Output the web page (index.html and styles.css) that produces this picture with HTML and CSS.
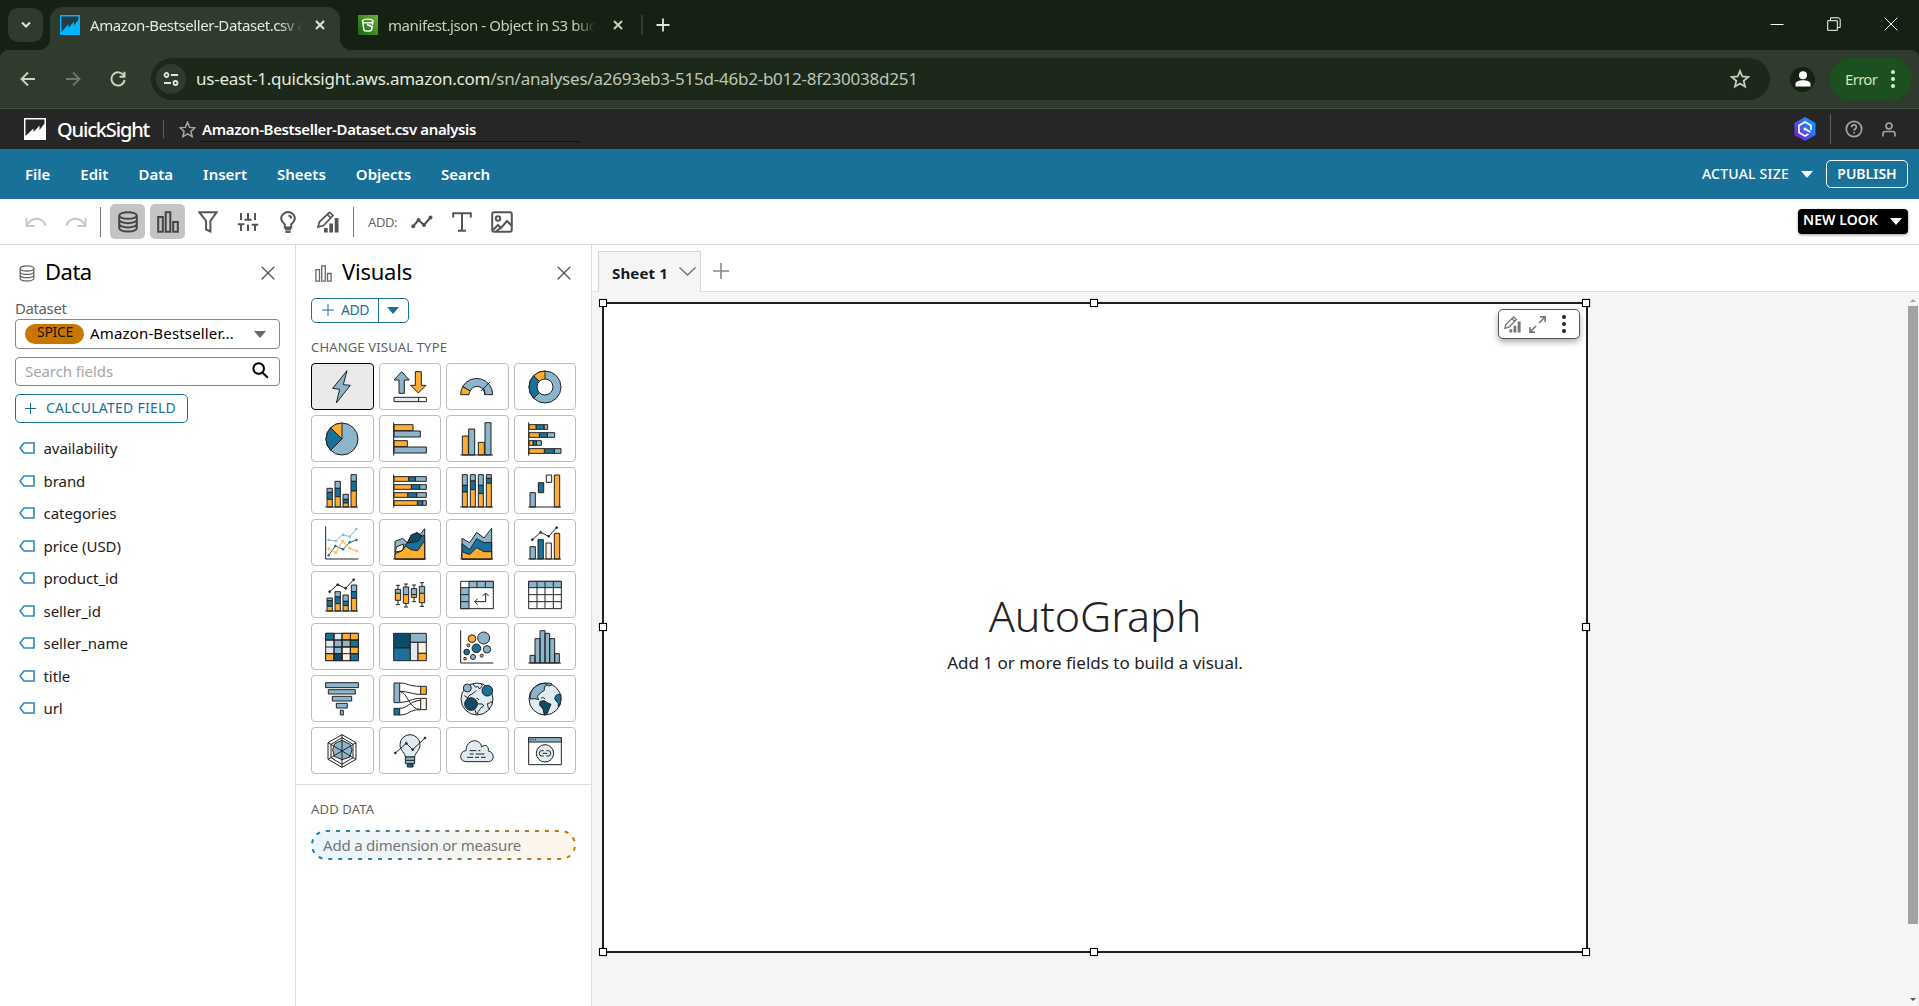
FILE: index.html
```html
<!DOCTYPE html>
<html lang="en">
<head>
<meta charset="utf-8">
<title>Amazon-Bestseller-Dataset.csv analysis</title>
<link rel="stylesheet" href="styles.css">
</head>
<body>
<svg class="defs" width="0" height="0">
  <defs>
    <linearGradient id="qgrad" x1="0" y1="1" x2="1" y2="0"><stop offset=".2" stop-color="#6a2be8"/><stop offset=".75" stop-color="#1a8cff"/></linearGradient>
    <linearGradient id="s3grad" x1="0" y1="1" x2="1" y2="0"><stop offset="0" stop-color="#1b660f"/><stop offset="1" stop-color="#6cae3e"/></linearGradient>
    <linearGradient id="dropgrad"><stop offset="0" stop-color="#0a84c4"/><stop offset="1" stop-color="#cc7a00"/></linearGradient>
    <linearGradient id="dropfill"><stop offset="0" stop-color="#e8f5fd"/><stop offset="1" stop-color="#fff5ea"/></linearGradient>
    <symbol id="db" viewBox="0 0 20 22"><path d="M1.2 4.5v12.6c0 1.9 3.9 3.5 8.8 3.5s8.8-1.6 8.8-3.5V4.500M1.200 8.700c0 1.900 3.900 3.500 8.800 3.500s8.800-1.600 8.800-3.500M1.200 12.900c0 1.900 3.900 3.500 8.800 3.500s8.800-1.600 8.800-3.500"/><ellipse cx="10" cy="4.500" rx="8.800" ry="3.300"/></symbol>
    <symbol id="bars" viewBox="0 0 22 22"><path d="M1.200 6h4.600v14.800H1.200zM8.700 1.200h4.600v19.600H8.700zM16.200 11h4.600v9.800h-4.600z"/></symbol>
    <symbol id="pencil" viewBox="0 0 22 22"><path d="M1 16 2.500 10.800 12.500 1.300 16 4.600 6.500 14.500zM10.300 3.500l3.500 3.300" fill="none" stroke-width="1.700"/><path d="M7 17h3.700v4.500H7zM12.300 12.500H16v9h-3.700zM17.700 7h3.800v14.500h-3.800z" fill="currentColor" stroke="none"/></symbol>
    <symbol id="tag" viewBox="0 0 16 12"><path d="M5 1h10v10H5L1 6z"/></symbol>
  </defs>
</svg>

<header class="tabstrip">
  <button class="tab-search"><svg width="12" height="8"><path d="M2 1.500l4 4 4-4"/></svg></button>
  <div class="tab active">
    <svg width="20" height="20"><path d="M0 0h20v20H0z" fill="#00b5ff" stroke="none"/><path d="M1.500 1.500h17v3L14 10.500V6.500L8.500 13V9L1.500 17z" fill="#243b45" stroke="none"/></svg>
    <span class="tab-title">Amazon-Bestseller-Dataset.csv a</span>
    <svg class="x" width="10" height="10"><path d="M1 1l8 8M9 1L1 9"/></svg>
  </div>
  <div class="tab">
    <svg width="20" height="20"><path d="M0 0h20v20H0z" fill="url(#s3grad)" stroke="none"/><path d="M4.500 6l1.500 9c.5 1.500 7 1.500 7.500 0l.6-3M15 6l-.6 4M9 9.500l6 2.500M4.500 6c0-2.500 10.500-2.500 10.500 0s-10.500 2.500-10.500 0z" fill="none" stroke="#fff" stroke-width="1.400"/></svg>
    <span class="tab-title second">manifest.json - Object in S3 buc</span>
    <svg class="x" width="10" height="10"><path d="M1 1l8 8M9 1L1 9"/></svg>
  </div>
  <span class="tab-sep"></span>
  <svg class="newtab" width="14" height="14"><path d="M7 .5v13M.5 7h13"/></svg>
  <div class="win">
    <svg width="14" height="14"><path d="M.5 7.500h13"/></svg>
    <svg width="14" height="14"><path d="M.7 3.700h9.600v9.600H.7zM3.500 3V.8h7.700q2 0 2 2V10.500H11"/></svg>
    <svg width="14" height="14"><path d="M.7.7l12.600 12.600M13.300.7L.7 13.300"/></svg>
  </div>
</header>

<div class="chrome">
<div class="addressbar">
  <svg class="nav" width="16" height="16"><path d="M15 8H2M8 1.500L1.500 8 8 14.500"/></svg>
  <svg class="nav dim" width="16" height="16"><path d="M1 8h13M8 1.500L14.500 8 8 14.500"/></svg>
  <svg class="nav" width="16" height="16"><path d="M13.800 4.600A6.600 6.600 0 1 0 14.600 9M14.500.8v5h-5"/></svg>
  <div class="omnibox">
    <span class="site"><svg width="16" height="14"><circle cx="3.500" cy="3" r="2"/><circle cx="12.500" cy="11" r="2"/><path d="M8 3h7M1 11h7"/></svg></span>
    <span class="url"><b>us-east-1.quicksight.aws.amazon.com</b>/sn/analyses/a2693eb3-515d-46b2-b012-8f230038d251</span>
    <svg class="star" width="20" height="20" viewBox="0 0 20 20"><path d="M10 2l2.300 5.500 6 .5-4.600 3.900 1.400 5.800L10 14.600l-5.100 3.100 1.400-5.800L1.700 8l6-.5z"/></svg>
  </div>
  <span class="avatar"><svg width="16" height="16"><circle cx="8" cy="4.200" r="4"/><path d="M.5 15.500v-2.500c0-5 15-5 15 0v2.500z"/></svg></span>
  <div class="error">Error<i></i></div>
</div>
</div>

<div class="appbar">
  <svg class="logo" width="22" height="22"><path d="M0 0h22v22H0z" fill="#fff" stroke="none"/><path d="M1.500 1.500h19v4L15.500 12V7.500L9.500 14V10.500L1.500 18z" fill="#262626" stroke="none"/></svg>
  <span class="brand">QuickSight</span>
  <span class="rule"></span>
  <svg class="fav" width="17" height="17" viewBox="0 0 20 20"><path d="M10 1.500l2.500 6 6.300.5-4.800 4.200 1.500 6.300L10 15.200l-5.500 3.300L6 12.200 1.200 8l6.300-.5z"/></svg>
  <span class="doc">Amazon-Bestseller-Dataset.csv analysis</span>
  <div class="right">
    <svg width="22" height="24" viewBox="0 0 22 24"><path d="M11 0l10.500 6v12L11 24 .5 18V6z" fill="url(#qgrad)" stroke="none"/><path d="M17 13V8.500L11 5 5 8.500v7l6 3.500 3.500-2M11 12l5.500 3" fill="none" stroke="#fff" stroke-width="1.700"/><circle cx="11" cy="12" r="1.600" fill="#fff" stroke="none"/></svg>
    <span class="rule tall"></span>
    <svg class="line" width="18" height="18"><circle cx="9" cy="9" r="7.700"/><path d="M6.700 7.200c0-3 4.700-3 4.700-.2 0 1.800-2.300 1.700-2.300 3.800M9.100 12v1.600"/></svg>
    <svg class="line" width="14" height="15"><circle cx="7" cy="4" r="3"/><path d="M1 14.500V12q0-2.500 2.500-2.500h7Q13 9.500 13 12v2.500"/></svg>
  </div>
</div>

<nav class="menubar">
  <span>File</span><span>Edit</span><span>Data</span><span>Insert</span><span>Sheets</span><span>Objects</span><span>Search</span>
  <div class="right"><span class="size">ACTUAL SIZE</span><i class="caret"></i><button class="publish">PUBLISH</button></div>
</nav>

<div class="toolbar">
  <svg class="faded" width="22" height="12"><path d="M1.500 2v8h8M1.800 9.800C6 .5 17 .5 20.700 9.500"/></svg>
  <svg class="faded redo" width="22" height="12"><path d="M20.500 2v8h-8M20.200 9.800C16 .5 5 .5 1.300 9.500"/></svg>
  <span class="vr"></span>
  <button class="on"><svg width="20" height="22"><use href="#db"/></svg></button>
  <button class="on second"><svg width="22" height="22"><use href="#bars"/></svg></button>
  <svg class="t1" width="20" height="22"><path d="M1.300 1.200h17.400L12.400 10v10.500l-4.300-2V10z"/></svg>
  <svg class="t2" width="22" height="20"><path d="M4 1v6M11 1v7M18 1v6M4 12v7M11 12.500V19M18 13v6M.8 12.200h6.500M7.500 7.800h7M14.700 12.800h6.500M4 7v1M18 7v1"/></svg>
  <svg class="t3" width="16" height="22"><path d="M4.800 16.500v-3C3 11.500 1.200 9.800 1.200 7.500a6.600 6.300 0 0 1 13.600 0c0 2.300-1.800 4-3.600 6v3zM5 18.500h6M5.500 21h5M8.500 4.500q2.500.3 2.700 3"/></svg>
  <svg class="t4" width="22" height="22"><use href="#pencil"/></svg>
  <span class="vr two"></span>
  <span class="add-label">ADD:</span>
  <svg class="t5" width="22" height="14"><path d="M2 11.500l5.500-6.500 5.500 5 6.500-7.500"/><g fill="#555" stroke="none"><circle cx="2.200" cy="11.300" r="2"/><circle cx="7.500" cy="5" r="2"/><circle cx="13" cy="10" r="2"/><circle cx="19.500" cy="2.500" r="2"/></g></svg>
  <svg class="t6" width="20" height="20"><path d="M1.200 5.500V1.200h17.600v4.300M10 1.200v17.600M6 18.800h8"/></svg>
  <svg class="t7" width="22" height="22"><rect x="1.200" y="1.200" width="19.600" height="19.600" rx="2"/><circle cx="7" cy="7.500" r="2.200"/><path d="M2 19l5-5 3 3 6-7 5 5M5 20.500l5-4"/></svg>
  <button class="newlook">NEW LOOK<i class="caret"></i></button>
</div>

<main class="work">
  <aside class="panel data">
    <div class="head"><svg class="ic" width="16" height="17"><use href="#db"/></svg><h2>Data</h2><svg class="close" width="14" height="14"><path d="M.7.7l12.600 12.600M13.300.7L.7 13.300"/></svg></div>
    <label class="lbl">Dataset</label>
    <div class="select"><span class="pill">SPICE</span><span class="val">Amazon-Bestseller...</span><i class="caret"></i></div>
    <div class="search"><span>Search fields</span><svg width="17" height="17"><circle cx="6.700" cy="6.500" r="5.300"/><path d="M10.500 10.500l5.300 5.300"/></svg></div>
    <button class="calc"><svg width="11" height="11"><path d="M5.500 0v11M0 5.500h11"/></svg><span>CALCULATED FIELD</span></button>
    <ul class="fields">
      <li><svg width="16" height="12"><use href="#tag"/></svg>availability</li>
      <li><svg width="16" height="12"><use href="#tag"/></svg>brand</li>
      <li><svg width="16" height="12"><use href="#tag"/></svg>categories</li>
      <li><svg width="16" height="12"><use href="#tag"/></svg>price (USD)</li>
      <li><svg width="16" height="12"><use href="#tag"/></svg>product_id</li>
      <li><svg width="16" height="12"><use href="#tag"/></svg>seller_id</li>
      <li><svg width="16" height="12"><use href="#tag"/></svg>seller_name</li>
      <li><svg width="16" height="12"><use href="#tag"/></svg>title</li>
      <li><svg width="16" height="12"><use href="#tag"/></svg>url</li>
    </ul>
  </aside>

  <aside class="panel visuals">
    <div class="head"><svg class="ic" width="17" height="17"><use href="#bars"/></svg><h2>Visuals</h2><svg class="close" width="14" height="14"><path d="M.7.7l12.600 12.600M13.300.7L.7 13.300"/></svg></div>
    <div class="addbtn"><span><svg width="12" height="12"><path d="M6 0v12M0 6h12"/></svg>ADD</span><span class="drop"><i class="caret"></i></span></div>
    <div class="cap">CHANGE VISUAL TYPE</div>
    <div class="grid">
      <button class="sel"><svg viewBox="-1 -1 102 102"><path class="a" d="M65 1L22 54l21 3-10 41 42-53-21-2z"/></svg></button>
      <button><svg viewBox="-1 -1 102 102"><path class="a" d="M25 4l23 25H33v40H17V29H2z"/><path class="o" d="M66 4h18v41h14L75 68 52 45h14z"/><path class="p" d="M2 81h74v13H2z"/><path class="w" d="M76 81h23v13H76z"/></svg></button>
      <button><svg viewBox="-1 -1 102 102"><path class="a" d="M7 49A48 48 0 0 1 97 73H73A23 23 0 0 0 29 62z"/><path class="o" d="M1 73A48 48 0 0 1 7 49l22 13a23 23 0 0 0-3 11z"/><path d="M89 35L62 62M70 54q5 10 4 19"/></svg></button>
      <button><svg viewBox="-1 -1 102 102"><circle class="a" cx="50" cy="50" r="48"/><path class="b" d="M50 50L16 16a48 48 0 0 0 0 68z"/><path class="o" d="M50 50L16 16A48 48 0 0 1 50 2z"/><circle class="w" cx="50" cy="50" r="24"/></svg></button>

      <button><svg viewBox="-1 -1 102 102"><circle class="a" cx="50" cy="50" r="48"/><path class="b" d="M50 50L16 16a48 48 0 0 0 0 68z"/><path class="o" d="M50 50L16 16A48 48 0 0 1 50 2z"/></svg></button>
      <button><svg viewBox="-1 -1 102 102"><path class="o" d="M2 7h57v18H2zM2 55h40v18H2z"/><path class="a" d="M2 26h79v18H2zM2 74h97v18H2z"/><path d="M1 0v100"/></svg></button>
      <button><svg viewBox="-1 -1 102 102"><path class="o" d="M6 41h18v57H6zM54 60h18v38H54z"/><path class="a" d="M25 20h18v78H25zM74 1h18v97H74z"/><path d="M0 98h98"/></svg></button>
      <button><svg viewBox="-1 -1 102 102"><path class="a" d="M47 7h11v14H47zM57 31h22v14H57zM24 55h15v14H24zM78 79h20v14H78z"/><path class="b" d="M23 7h24v14H23zM33 31h24v14H33zM14 55h10v14H14zM48 79h30v14H48z"/><path class="o" d="M2 7h21v14H2zM2 31h31v14H2zM2 55h12v14H2zM2 79h46v14H2z"/><path d="M1 0v100"/></svg></button>

      <button><svg viewBox="-1 -1 102 102"><path class="a" d="M5 42h16v12H5zM29 21h16v21H29zM53 60h16v15H53zM77 1h16v20H77z"/><path class="b" d="M5 54h16v21H5zM29 42h16v25H29zM53 75h16v11H53zM77 21h16v29H77z"/><path class="o" d="M5 75h16v23H5zM29 67h16v31H29zM53 86h16v12H53zM77 50h16v48H77z"/><path d="M0 98h98"/></svg></button>
      <button><svg viewBox="-1 -1 102 102"><path class="a" d="M66 7h33v14H66zM79 31h20v14H79zM70 55h29v14H70zM88 79h11v14H88z"/><path class="b" d="M46 7h20v14H46zM54 31h25v14H54zM43 55h27v14H43zM72 79h16v14H72z"/><path class="o" d="M2 7h44v14H2zM2 31h52v14H2zM2 55h41v14H2zM2 79h70v14H2z"/><path d="M1 0v100"/></svg></button>
      <button><svg viewBox="-1 -1 102 102"><path class="a" d="M6 1h15v32H6zM30 1h15v19H30zM54 1h15v32H54zM78 1h15v11H78z"/><path class="b" d="M6 33h15v20H6zM30 20h15v26H30zM54 33h15v25H54zM78 12h15v15H78z"/><path class="o" d="M6 53h15v45H6zM30 46h15v52H30zM54 58h15v40H54zM78 27h15v71H78z"/><path d="M0 98h98"/></svg></button>
      <button><svg viewBox="-1 -1 102 102"><path class="a" d="M5 55h16v43H5z"/><path class="b" d="M30 25h16v30H30z"/><path class="c" d="M54 2h16v22H54z"/><path class="o" d="M78 2h16v96H78z"/><path d="M0 98h98"/></svg></button>

      <button><svg viewBox="-1 -1 102 102"><path d="M1 0v98h98"/><g class="dots la"><path d="M10 41l22 3 21-19 20 6L93 8"/><circle cx="10" cy="41" r="3"/><circle cx="32" cy="44" r="3"/><circle cx="53" cy="25" r="3"/><circle cx="73" cy="31" r="3"/><circle cx="93" cy="8" r="3"/></g><g class="dots lb"><path d="M10 87l20-28 23 10 20-21 20-7"/><circle cx="10" cy="87" r="3"/><circle cx="30" cy="59" r="3"/><circle cx="53" cy="69" r="3"/><circle cx="73" cy="48" r="3"/><circle cx="93" cy="41" r="3"/></g><g class="dots lo"><path d="M10 67l21 12 21-35 21 22 21 8"/><circle cx="10" cy="67" r="3"/><circle cx="31" cy="79" r="3"/><circle cx="52" cy="44" r="3"/><circle cx="73" cy="66" r="3"/><circle cx="94" cy="74" r="3"/></g></svg></button>
      <button><svg viewBox="-1 -1 102 102"><path class="a" d="M5 45l23-9 16 15 10 8L94 7v91H5z"/><path class="b" d="M36 57l8-12 10-19 18-7 14 10 8-2v71H30z"/><path class="n" d="M42 50l12-24 18-7 14 10-12 16-18 3z"/><path class="c" d="M5 77l5-16 22-8-4 20z"/><path class="o" d="M5 82l22-9 10-14 16 11 20 3 21-30v55H5z"/><path d="M0 98h98"/></svg></button>
      <button><svg viewBox="-1 -1 102 102"><path class="a" d="M5 36l23 13 21-31 22 17L94 6v92H5z"/><path class="b" d="M5 52l23 18 21-33 22 12 23-1v50H5z"/><path class="o" d="M5 76l23 9 21-21 22 12h23v22H5z"/><path d="M0 98h98"/></svg></button>
      <button><svg viewBox="-1 -1 102 102"><path class="a" d="M5 61h16v37H5z"/><path class="b" d="M29 40h16v58H29z"/><path class="c" d="M53 50h16v48H53z"/><path class="o" d="M78 21h16v77H78z"/><path d="M0 98h98"/><g class="dots lk"><path d="M12 40l25-22 24 12L85 4"/><circle cx="12" cy="40" r="3"/><circle cx="37" cy="18" r="3"/><circle cx="61" cy="30" r="3"/><circle cx="85" cy="4" r="3"/></g></svg></button>

      <button><svg viewBox="-1 -1 102 102"><path class="a" d="M5 59h16v8H5zM29 40h16v16H29zM53 50h16v19H53zM78 20h16v20H78z"/><path class="b" d="M5 67h16v17H5zM29 56h16v20H29zM53 69h16v13H53zM78 40h16v20H78z"/><path class="o" d="M5 84h16v14H5zM29 76h16v22H29zM53 82h16v16H53zM78 60h16v38H78z"/><path d="M0 98h98"/><g class="dots lk"><path d="M13 40l24-21 24 11L85 4"/><circle cx="13" cy="40" r="3"/><circle cx="37" cy="19" r="3"/><circle cx="61" cy="30" r="3"/><circle cx="85" cy="4" r="3"/></g></svg></button>
      <button><svg viewBox="-1 -1 102 102"><path d="M14 21v58M8 21h12M8 79h12M38 17v69M32 17h12M32 86h12M62 20v50M56 20h12M56 70h12M86 13v71M80 13h12M80 84h12"/><path class="a" d="M6 33h16v12H6zM30 26h16v23H30zM54 31h16v18H54zM78 24h16v21H78z"/><path class="o" d="M6 45h16v21H6zM30 49h16v26H30zM54 49h16v8H54zM78 45h16v28H78z"/></svg></button>
      <button><svg viewBox="-1 -1 102 102"><path class="w" d="M1 9h98v82H1z"/><path class="a" d="M26 9h73v19H26zM1 28h25v63H1z"/><path d="M50 9v19M75 9v19M1 49h25M1 70h25M76 46v24H44M67 53l9-9 9 9M52 61l-9 9 9 9"/></svg></button>
      <button><svg viewBox="-1 -1 102 102"><path class="w" d="M1 9h98v82H1z"/><path class="a" d="M1 9h98v19H1z"/><path d="M26 9v82M50 9v82M75 9v82M1 49h98M1 70h98"/></svg></button>

      <button><svg viewBox="-1 -1 102 102"><path class="p" d="M1 9h98v82H1z"/><path class="b" d="M1 9h25v20H1zM75 29h24v21H75zM75 70h24v21H75z"/><path class="o" d="M50 9h49v20H50zM75 50h24v20H75zM1 70h25v21H1z"/><path class="a" d="M50 29h25v21H50zM26 50h24v20H26z"/><path class="c" d="M50 50h25v41H50z"/><path class="a" d="M26 29h24v21H26z"/><path class="n" d="M26 70h24v21H26z"/><path d="M26 9v82M50 9v82M75 9v82M1 29h98M1 50h98M1 70h98"/></svg></button>
      <button><svg viewBox="-1 -1 102 102"><path class="n" d="M1 9h50v43H1z"/><path class="b" d="M1 53h50v38H1z"/><path class="a" d="M51 9h48v27H51z"/><path class="p" d="M51 36h23v55H51z"/><path class="c" d="M74 36h25v33H74z"/><path class="o" d="M74 69h25v22H74z"/></svg></button>
      <button><svg viewBox="-1 -1 102 102"><path d="M1 0v98h98"/><g class="a"><circle cx="70" cy="23" r="18"/><circle cx="80" cy="57" r="11"/><circle cx="38" cy="80" r="7.500"/></g><g class="o"><circle cx="35" cy="25" r="11.500"/><circle cx="24" cy="45" r="4.500"/><circle cx="64" cy="76" r="4.500"/><circle cx="14" cy="85" r="4"/></g><g class="b"><circle cx="48" cy="54" r="13"/><circle cx="19" cy="65" r="8.500"/></g></svg></button>
      <button><svg viewBox="-1 -1 102 102"><path class="a" d="M5 75h15v23H5zM20 25h15v73H20zM35 1h15v97H35zM50 9h14v89H50zM64 25h15v73H64zM79 70h14v28H79z"/><path d="M0 98h98"/></svg></button>

      <button><svg viewBox="-1 -1 102 102"><path class="a" d="M1 1h98v15H1zM9 22h81v13H9zM21 42h58v14H21zM33 63h33v14H33zM45 84h9v14h-9z"/></svg></button>
      <button><svg viewBox="-1 -1 102 102"><path d="M19 2c25 0 25 10 63 10M19 27c28 0 35 9 63 9M19 28c25 0 25 52 63 54M19 60c30 0 35-12 63-12M19 78c25 0 30-22 63-24M19 98c30 0 25-16 63-16"/><path class="a" d="M2 2h17v59H2z"/><path class="b" d="M2 78h17v20H2z"/><path class="o" d="M82 12h17v24H82z"/><path class="c" d="M82 48h17v34H82z"/></svg></button>
      <button><svg viewBox="-1 -1 102 102"><circle class="p" cx="50" cy="50" r="48"/><path d="M38 5l8 10 6-3 6 8 8-10-5-7M48 24l-8 8-14 8-8 14M12 40l12 8M48 48q6 0 8 5M97 60q-8-4-10 3-8-3-5 6 0 10 8 14M42 67q16-4 24-2l4 6q-10 6-16 16l-4 10M44 82l4 14"/><circle class="a" cx="21" cy="17" r="12"/><circle class="b" cx="81" cy="25" r="16"/><circle class="n" cx="32" cy="65" r="19"/></svg></button>
      <button><svg viewBox="-1 -1 102 102"><circle class="p" cx="50" cy="50" r="48"/><path class="a" d="M24 11Q4 24 5 50l14-1 12 3-4-10 9-10 12-8V13l6-3-2-7Q36 2 24 11z"/><path class="a" d="M53 3l7 8 9-2 2-4Q62 1 53 3z"/><path class="n" d="M35 57l13-2 10 7 10 4-6 14-6 14-8 4-4-18-10-12z"/><path class="b" d="M98 37q-12-4-17 5-4 8 2 14l7 6v12q8-8 8-24z"/><path d="M38 47q8-4 12 3"/></svg></button>

      <button><svg viewBox="-1 -1 102 102"><path d="M50 1l42 24v50L50 99 8 75V25zM50 10l33 20v40L50 90 17 70V30z"/><path class="a" d="M50 18l24 12 6 16-6 22-24 8-23-10-5-20 6-18z"/><path d="M50 1v98M8 25l84 50M92 25L8 75"/></svg></button>
      <button><svg viewBox="-1 -1 102 102"><path class="p" d="M36 68c0-12-16-18-16-37a30 30 0 0 1 60 0c0 19-16 25-16 37z"/><path class="a" d="M36 68h28v20H36z"/><path class="b" d="M42 89h17v9H42z"/><path d="M36 78h28"/><g class="dots lk"><path d="M6 56l33-29 19 19 37-35"/><circle cx="6" cy="56" r="3"/><circle cx="39" cy="27" r="3"/><circle cx="58" cy="46" r="3"/><circle cx="95" cy="11" r="3"/></g></svg></button>
      <button><svg viewBox="-1 -1 102 102"><path class="p" d="M18 82C-5 82-4 50 17 49 17 13 60 10 64 38c10-9 22-4 20 12 20 4 19 32 0 32z"/><path d="M28 49h20M54 49h6M28 59h12M46 59h26M20 69h18M44 69h12M62 69h14"/></svg></button>
      <button><svg viewBox="-1 -1 102 102"><path class="w" d="M1 10h98v81H1z"/><path class="a" d="M1 10h98v13H1z"/><path d="M6 16h3M13 16h3M20 16h3"/><circle class="p" cx="50" cy="57" r="26"/><path d="M46 49h-6q-7 0-7 8t7 8h6M54 49h6q7 0 7 8t-7 8h-6M43 57h14"/></svg></button>
    </div>
    <hr>
    <div class="cap addcap">ADD DATA</div>
    <div class="dropzone"><svg width="265" height="30"><rect x="1" y="1" width="263" height="28" rx="14" fill="url(#dropfill)" stroke="url(#dropgrad)" stroke-width="2" stroke-dasharray="4 5.950"/></svg><span>Add a dimension or measure</span></div>
  </aside>

  <section class="stage">
    <div class="sheets">
      <div class="sheet">Sheet 1<svg width="17" height="9"><path d="M.5.5l8 7.500 8-7.500"/></svg></div>
      <svg class="plus" width="16" height="16"><path d="M8 0v16M0 8h16"/></svg>
    </div>
    <div class="canvas">
      <div class="visual">
        <h1>AutoGraph</h1>
        <p>Add 1 or more fields to build a visual.</p>
        <div class="tools">
          <svg width="17" height="17"><use href="#pencil"/></svg>
          <svg width="17" height="17" viewBox="0 0 17 17"><path d="M10 7l6-6M11 .9h5.100V6M7 10l-6 6M.9 11v5.100H6"/></svg>
          <i></i>
        </div>
        <b class="h tl"></b><b class="h tc"></b><b class="h tr"></b><b class="h ml"></b><b class="h mr"></b><b class="h bl"></b><b class="h bc"></b><b class="h br"></b>
      </div>
      <div class="scroll"><i class="up"></i><span></span><i class="down"></i></div>
    </div>
  </section>
</main>
</body>
</html>
```
FILE: styles.css
```css
* { box-sizing: border-box; }
body {
  margin: 0; width: 1919px; height: 1006px; overflow: hidden;
  display: flex; flex-direction: column;
  font: 400 15px/20px "Noto Sans", "Open Sans", sans-serif;
  color: #16191f; background: #fff;
}
svg { display: block; flex: none; fill: none; stroke: currentColor; }
.defs { position: absolute; }
button { font: inherit; color: inherit; background: none; border: 0; padding: 0; margin: 0; display: flex; align-items: center; }
h1, h2, p, ul { margin: 0; padding: 0; font-weight: 400; }
i, span { flex: none; }
.caret { width: 0; height: 0; border: 6.5px solid transparent; border-top: 7px solid currentColor; border-bottom: 0; }

/* browser chrome */
.tabstrip { height: 50px; flex: none; display: flex; align-items: flex-start; background: #152213; color: #dfe5d8; padding-left: 8px; }
.tab-search { width: 35px; height: 34px; margin: 8px 7px 0 0; border-radius: 10px; background: #2f3c2d; justify-content: center; }
.tab-search svg, .x { stroke-width: 2; }
.tab { display: flex; align-items: center; height: 36px; margin-top: 7px; width: 290px; padding-left: 10px; letter-spacing: -.42px; color: #c3d0bb; }
.tab.active { height: 43px; padding-bottom: 7px; border-radius: 13px 13px 0 0; background: #2f3c2d; color: #e3e9dc; position: relative; }
.tab.active::before, .tab.active::after { content: ""; position: absolute; bottom: 0; width: 12px; height: 12px; }
.tab.active::before { left: -12px; background: radial-gradient(circle at 0 0, transparent 12px, #2f3c2d 12.5px); }
.tab.active::after { right: -12px; background: radial-gradient(circle at 100% 0, transparent 12px, #2f3c2d 12.5px); }
.tab-title { width: 217px; margin: 0 8px 0 10px; white-space: nowrap; -webkit-mask: linear-gradient(90deg, #000 88%, transparent 98%); mask: linear-gradient(90deg, #000 88%, transparent 98%); }
.tab:not(.active) { padding-left: 18px; width: 300px; }
.tab-title.second { width: 212px; margin-right: 13px; }
.tab-sep { width: 2px; height: 20px; margin: 15px 13px 0 1px; background: #2f3c2d; }
.newtab { margin-top: 18px; stroke-width: 1.8; }
.win { display: flex; gap: 43px; margin: 17px 21px 0 auto; color: #fff; }
.chrome { flex: none; background: linear-gradient(#152213 50%, #2f3c2d 50%); }
.addressbar { height: 59px; display: flex; align-items: center; background: #2f3c2d; border-bottom: 1px solid #435040; padding: 0 6px 0 20px; color: #c8d6bf; border-radius: 8px 8px 0 0; }
.nav { stroke-width: 1.9; margin-right: 29px; }
.nav.dim { color: #6c7968; }
.omnibox { display: flex; align-items: center; width: 1619px; height: 42px; margin-left: -4px; padding: 0 20px 0 5px; border-radius: 21px; background: #1c291a; }
.site { width: 30px; height: 30px; border-radius: 15px; background: #2f3c2d; display: flex; align-items: center; justify-content: center; margin-right: 10px; color: #dfe5d8; }
.site svg { stroke-width: 1.8; }
.url { font-size: 17px; letter-spacing: -.23px; color: #bcc6b5; }
.url b { font-weight: 400; color: #e4eadd; }
.star { margin-left: auto; stroke-width: 1.8; color: #c5cfbd; }
.avatar { width: 25px; height: 25px; margin-left: 20px; border-radius: 13px; background: #152213; display: flex; align-items: center; justify-content: center; }
.avatar svg { fill: #fff; stroke: none; }
.error { display: flex; align-items: center; width: 82px; height: 42px; margin-left: 15px; padding-left: 15px; border-radius: 21px; background: #1d5020; color: #c9e9bf; letter-spacing: -.7px; }
.error i { width: 4px; height: 4px; margin-left: 14px; border-radius: 2px; background: #dcf0d5; box-shadow: 0 -7px #dcf0d5, 0 7px #dcf0d5; }

/* application header */
.appbar { height: 40px; flex: none; display: flex; align-items: center; background: #262626; color: #fff; padding-left: 24px; }
.brand { width: 92px; margin-left: 11px; font-size: 20px; font-weight: 500; letter-spacing: -1.16px; padding-top: 2px; }
.rule { width: 1px; height: 18px; margin: 0 15px 0 14px; background: #5f5f5f; }
.fav { stroke-width: 1.7; color: #a8a8a8; }
.doc { width: 380px; height: 26px; margin-left: 4px; padding: 2px 0 0 2px; line-height: 23px; font-weight: 600; letter-spacing: -.36px; border-bottom: 1px solid #111; }
.right { display: flex; align-items: center; margin-left: auto; }
.appbar .right { padding-right: 23px; }
.line { color: #a5a5a5; stroke-width: 1.7; }
.line + .line { margin-left: 19px; }
.rule.tall { height: 30px; margin: 0 14px; }
.menubar { height: 50px; flex: none; display: flex; align-items: center; gap: 30px; padding: 0 11px 0 25px; background: #19719a; color: #fff; font-weight: 600; }
.size { font-size: 14px; font-weight: 500; letter-spacing: .22px; }
.menubar .caret { margin: 0 13px 0 12px; }
.publish { width: 82px; height: 28px; justify-content: center; border: 1px solid #fff; border-radius: 5px; font-size: 14px; }

.toolbar { height: 46px; flex: none; display: flex; align-items: center; padding: 0 11px 0 25px; border-bottom: 1px solid #dedede; color: #555; }
.toolbar svg { stroke-width: 2; }
.toolbar .faded { color: #c9c9c9; }
.redo { margin-left: 18px; }
.vr { width: 1px; height: 30px; margin: 0 9px 0 13px; background: #777; }
.on { width: 35px; height: 35px; border-radius: 5px; background: #c4c4c4; justify-content: center; color: #444; }
.on.second { margin-left: 5px; }
.t1 { margin-left: 13px; }
.t2 { margin-left: 19px; }
.t3 { margin-left: 21px; }
.t4 { margin-left: 21px; }
.vr.two { margin: 0 14px; }
.add-label { width: 29px; font-size: 13px; letter-spacing: -.4px; color: #666; }
.t5 { margin-left: 14px; }
.t6 { margin-left: 19px; }
.t7 { margin-left: 19px; }
.newlook { width: 110px; height: 25px; margin-left: auto; padding: 0 6px 3px 5px; border-radius: 4px; background: #000; color: #fff; font-size: 14px; font-weight: 600; letter-spacing: .08px; justify-content: space-between; box-shadow: 0 1px 3px #0006; }
.newlook .caret { margin-top: 3px; }

/* side panels */
.work { flex: 1; display: flex; min-height: 0; }
.panel { width: 296px; flex: none; border-right: 1px solid #dedede; padding: 0 14px 0 15px; display: flex; flex-direction: column; align-items: flex-start; }
.head { display: flex; align-items: center; align-self: stretch; height: 30px; margin-top: 13px; color: #666; padding-left: 4px; }
.head h2 { margin-left: 10px; color: #000; font-size: 22px; letter-spacing: -.5px; line-height: 30px; padding-bottom: 4px; }
.head .ic use { stroke-width: 1.7; }
.head .close { margin: 0 6px 0 auto; stroke-width: 1.3; color: #555; }
.lbl { margin-top: 10px; height: 21px; letter-spacing: -.4px; color: #5f5f5f; }
.select, .search { width: 265px; border: 1px solid #888; border-radius: 4px; display: flex; align-items: center; }
.select { height: 30px; padding: 0 13px 0 9px; color: #000; }
.pill { width: 59px; height: 20px; padding-left: 12px; border-radius: 10px; background: #c77700; font-size: 14px; line-height: 16px; letter-spacing: -.3px; color: #1f1405; }
.val { margin-left: 6px; padding-bottom: 2px; letter-spacing: .16px; }
.select .caret { margin-left: auto; color: #666; }
.search { height: 29px; margin-top: 8px; padding: 0 10px 0 9px; justify-content: space-between; color: #a6a6a6; letter-spacing: -.09px; }
.search span { padding-bottom: 2px; }
.search svg { color: #000; stroke-width: 2; margin-bottom: 2px; }
.calc { width: 173px; height: 29px; margin-top: 8px; padding-left: 9px; gap: 10px; border: 1px solid #19719a; border-radius: 5px; color: #19719a; font-size: 14px; letter-spacing: .25px; }
.calc span { padding-bottom: 2px; }
.fields { list-style: none; padding-top: 9px; }
.fields li { display: flex; align-items: center; height: 32.500px; gap: 8.500px; padding-left: 4px; color: #1b1b1b; letter-spacing: -.05px; }
.fields svg { color: #2b88bf; stroke-width: 1.6; }

.visuals .head h2 { letter-spacing: -.23px; }
.addbtn { display: flex; width: 98px; height: 25px; margin-top: 10px; border: 1px solid #19719a; border-radius: 5px; color: #19719a; font-size: 14px; letter-spacing: -.4px; }
.addbtn span { display: flex; align-items: center; gap: 7px; padding: 0 0 1px 10px; width: 66px; }
.addbtn .drop { flex: 1; padding-left: 8px; border-left: 1px solid #19719a; }
.cap { margin-top: 14px; font-size: 13px; letter-spacing: .17px; color: #5f5f5f; }
.grid { width: 265px; display: grid; grid-template-columns: repeat(4, 1fr); grid-auto-rows: 47px; gap: 5px; margin-top: 6px; }
.grid button { border: 1px solid #bdbdbd; border-radius: 4px; justify-content: center; }
.grid .sel { border-color: #000; background: #eaeaea; }
.grid svg { width: 34px; height: 34px; stroke: #222; stroke-width: 3; }
.a { fill: #8cb5cb; } .b { fill: #19719a; } .o { fill: #ffad31; } .n { fill: #0f4b66; }
.p { fill: #e0ecf1; } .c { fill: #fff1e2; } .w { fill: #fff; }
.dots path { fill: none; }
.dots circle { stroke-width: 2; }
.la { stroke: #8cb5cb; fill: #8cb5cb; } .lb { stroke: #19719a; fill: #19719a; }
.lo { stroke: #ffad31; fill: #ffad31; } .lk { stroke: #222; fill: #222; }
hr { width: 295px; height: 1px; margin: 10px 0 0 -15px; border: 0; background: #dedede; }
.addcap { margin-top: 14px; }
.dropzone { display: grid; width: 265px; height: 30px; margin-top: 11px; }
.dropzone > * { grid-area: 1 / 1; }
.dropzone svg { stroke: none; }
.dropzone span { padding-left: 12px; line-height: 31px; letter-spacing: -.2px; color: #757575; }

/* sheet area */
.stage { flex: 1; display: flex; flex-direction: column; min-width: 0; background: #f5f5f5; }
.sheets { height: 47px; flex: none; display: flex; align-items: flex-end; padding-left: 6px; background: #fff; border-bottom: 1px solid #dedede; }
.sheet { display: flex; align-items: center; width: 103px; height: 41px; margin-bottom: -1px; padding: 1px 4px 0 13px; border: 1px solid #d5d5d5; border-bottom: 0; background: #f5f5f5; font-weight: 700; letter-spacing: .15px; justify-content: space-between; }
.sheet svg { color: #777; stroke-width: 1.5; margin-bottom: 2px; }
.plus { margin: 0 0 12px 12px; stroke-width: 1.6; color: #888; }
.canvas { flex: 1; display: flex; justify-content: space-between; padding: 10px 1px 0 10px; }
.visual { position: relative; width: 986px; height: 651px; border: 2px solid #1f1f1f; background: #fff; display: flex; flex-direction: column; align-items: center; }
h1 { margin-top: 282px; font-size: 43px; font-weight: 300; line-height: 60px; letter-spacing: -.1px; color: #222; }
p { margin-top: 5px; font-size: 17px; line-height: 24px; color: #222; }
.tools { position: absolute; top: 5px; right: 6px; width: 82px; height: 30px; display: flex; align-items: center; padding-left: 5px; gap: 8px; border: 1px solid #555; border-radius: 5px; background: #fff; color: #777; box-shadow: 0 3px 6px #0005; stroke-width: 1.6; }
.tools i { width: 4px; height: 4px; margin-left: 8px; border-radius: 2px; background: #222; box-shadow: 0 -7px #222, 0 7px #222; }
.h { position: absolute; width: 8px; height: 8px; background: #fff; border: 1px solid #000; box-shadow: 0 0 1px #0008; }
.tl, .tc, .tr { top: -5px; } .ml, .mr { top: 319px; } .bl, .bc, .br { bottom: -5px; }
.tl, .ml, .bl { left: -5px; } .tc, .bc { left: 486px; } .tr, .mr, .br { right: -4px; }
.scroll { width: 10px; display: flex; flex-direction: column; align-items: center; }
.scroll span { width: 10px; height: 618px; background: #a2a2a2; }
.scroll i { border: 3px solid transparent; }
.scroll .up { border-bottom-color: #a2a2a2; border-top: 0; margin: -3px 0 4px; }
.scroll .down { border-top-color: #555; border-bottom: 0; margin: auto 0 5px; }
```
